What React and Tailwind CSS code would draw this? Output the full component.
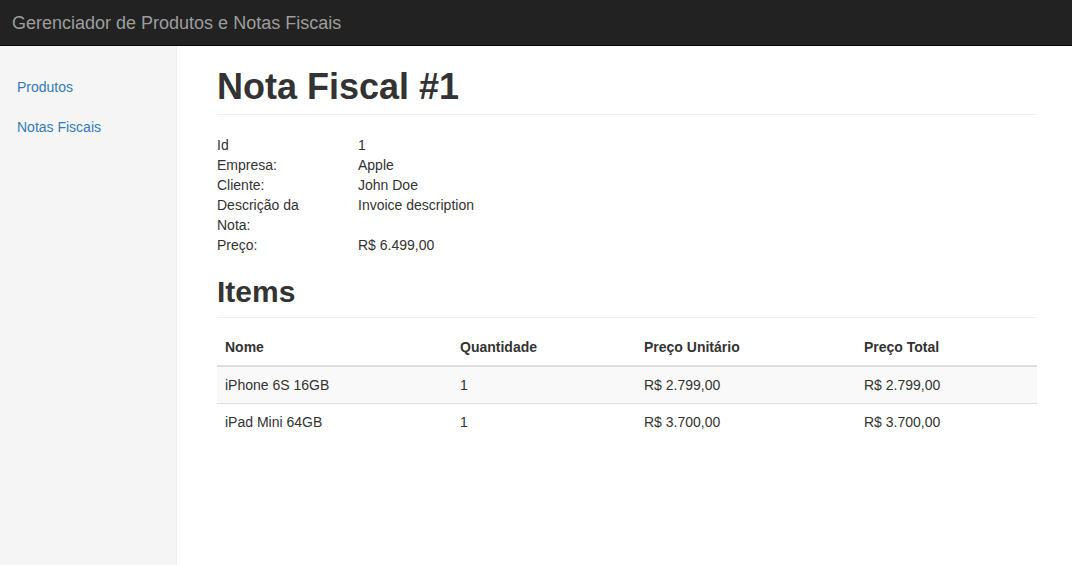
const items = [
  { nome: "iPhone 6S 16GB", qtd: 1, unit: "R$ 2.799,00", total: "R$ 2.799,00" },
  { nome: "iPad Mini 64GB", qtd: 1, unit: "R$ 3.700,00", total: "R$ 3.700,00" },
];

const details = [
  ["Id", "1"],
  ["Empresa:", "Apple"],
  ["Cliente:", "John Doe"],
  ["Descrição da Nota:", "Invoice description"],
  ["Preço:", "R$ 6.499,00"],
];

export default function App() {
  return (
    <div className="min-h-screen flex flex-col bg-white text-[#333] text-[14px] leading-[20px] font-['Liberation_Sans',Arial,sans-serif]">
      {/* Navbar */}
      <div className="h-[46px] bg-[#222] border-b border-[#080808] flex items-center px-[12px] shrink-0">
        <span className="text-[18px] text-[#9d9d9d]">Gerenciador de Produtos e Notas Fiscais</span>
      </div>

      <div className="flex flex-1">
        {/* Sidebar */}
        <div className="w-[177px] shrink-0 bg-[#f5f5f5] border-r border-[#eee] pt-[21px]">
          <a className="block px-[17px] py-[10px] text-[#337ab7]" href="#">Produtos</a>
          <a className="block px-[17px] py-[10px] text-[#337ab7]" href="#">Notas Fiscais</a>
        </div>

        {/* Main */}
        <div className="flex-1 pl-[40px] pr-[35px] pt-[21px]">
          <h1 className="text-[36px] leading-[40px] font-bold pb-[7px] border-b border-[#eee]">Nota Fiscal #1</h1>

          <dl className="mt-[20px] grid grid-cols-[100px_1fr] gap-x-[41px]">
            {details.map(([k, v]) => (
              <div key={k} className="contents">
                <dt className="font-normal">{k}</dt>
                <dd className="text-[#333]">{v}</dd>
              </div>
            ))}
          </dl>

          <h2 className="mt-[20px] text-[30px] leading-[33px] font-bold pb-[9px] border-b border-[#eee]">Items</h2>

          <table className="mt-[11px] w-full border-collapse">
            <thead>
              <tr className="border-b-2 border-[#ddd]">
                <th className="w-[235px] text-left font-bold px-[8px] py-[8px]">Nome</th>
                <th className="w-[184px] text-left font-bold px-[8px] py-[8px]">Quantidade</th>
                <th className="w-[220px] text-left font-bold px-[8px] py-[8px]">Preço Unitário</th>
                <th className="text-left font-bold px-[8px] py-[8px]">Preço Total</th>
              </tr>
            </thead>
            <tbody>
              {items.map((it, i) => (
                <tr key={it.nome} className={`${i > 0 ? "border-t border-[#ddd]" : ""} ${i % 2 === 0 ? "bg-[#f9f9f9]" : ""}`}>
                  <td className="px-[8px] py-[8px]">{it.nome}</td>
                  <td className="px-[8px] py-[8px]">{it.qtd}</td>
                  <td className="px-[8px] py-[8px]">{it.unit}</td>
                  <td className="px-[8px] py-[8px]">{it.total}</td>
                </tr>
              ))}
            </tbody>
          </table>
        </div>
      </div>
    </div>
  );
}
